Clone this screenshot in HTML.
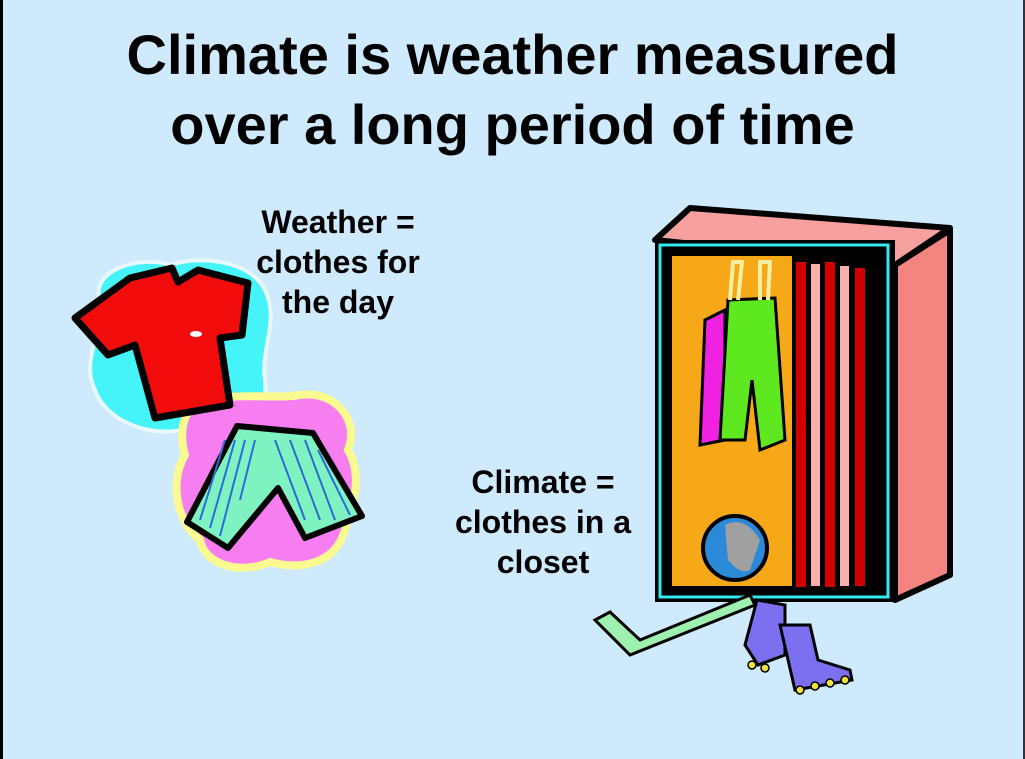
<!DOCTYPE html>
<html><head><style>
body{margin:0;width:1025px;height:759px;overflow:hidden;background:#cfeafc;font-family:"Liberation Sans",sans-serif;position:relative}
.bl{position:absolute;left:0;top:0;width:3px;height:759px;background:#000}
.br{position:absolute;right:0;top:0;width:2px;height:759px;background:#333}
h1{position:absolute;left:0;width:1025px;top:20px;margin:0;text-align:center;font-size:56px;line-height:70px;font-weight:bold;color:#000}
.t{position:absolute;text-align:center;font-weight:bold;font-size:32px;line-height:40px;color:#000}
svg{position:absolute;left:0;top:0}
</style></head><body>
<div class="bl"></div><div class="br"></div>
<h1>Climate is weather measured<br>over a long period of time</h1>
<div class="t" style="left:218px;top:202px;width:240px">Weather =<br>clothes for<br>the day</div>
<div class="t" style="left:423px;top:462px;width:240px">Climate =<br>clothes in a<br>closet</div>
<svg width="1025" height="759">
<path d="M100 300 C90 270 140 255 170 265 C200 255 250 260 265 290 C280 320 260 350 265 380 C270 420 230 440 190 428 C150 440 105 420 95 390 C80 360 105 330 100 300Z" fill="#44f4f8" stroke="#e8f8ff" stroke-width="4"/>
<path d="M195 405 C230 390 270 400 300 395 C335 390 360 420 348 450 C365 480 350 510 345 530 C335 565 300 570 270 562 C240 575 205 565 200 540 C175 520 170 480 185 455 C178 430 185 412 195 405Z" fill="#f77ef0" stroke="#fafa90" stroke-width="8"/>
<path d="M75 318 L130 278 L172 268 L178 282 L198 270 L248 283 L242 335 L220 338 L230 405 L155 418 L135 345 L108 355 Z" fill="#f20c0c" stroke="#000" stroke-width="7" stroke-linejoin="round"/>
<ellipse cx="196" cy="334" rx="6" ry="3" fill="#fff"/>
<path d="M237 426 L313 433 L362 516 L305 538 L278 488 L228 548 L187 522 Z" fill="#7ef2c0" stroke="#000" stroke-width="6" stroke-linejoin="round"/>
<g stroke="#2a6cd8" stroke-width="2">
<line x1="225" y1="440" x2="200" y2="520"/><line x1="235" y1="440" x2="210" y2="528"/><line x1="245" y1="440" x2="220" y2="536"/><line x1="255" y1="440" x2="240" y2="500"/>
<line x1="275" y1="440" x2="305" y2="520"/><line x1="290" y1="440" x2="320" y2="520"/><line x1="305" y1="440" x2="335" y2="520"/><line x1="318" y1="450" x2="350" y2="515"/>
</g>
<path d="M895 265 L950 230 L950 575 L895 600 Z" fill="#f38480" stroke="#000" stroke-width="6" stroke-linejoin="round"/>
<path d="M655 240 L690 208 L950 228 L895 265 Z" fill="#f6a0a0" stroke="#000" stroke-width="6" stroke-linejoin="round"/>
<rect x="655" y="240" width="240" height="362" fill="#000"/>
<rect x="660" y="245" width="228" height="352" fill="none" stroke="#34e8f0" stroke-width="3"/>
<rect x="672" y="256" width="120" height="330" fill="#f7a818"/>
<g fill="#d00000"><rect x="796" y="262" width="10" height="325"/><rect x="825" y="262" width="10" height="325"/><rect x="855" y="268" width="10" height="318"/></g>
<g fill="#f7b0b0"><rect x="811" y="264" width="9" height="322"/><rect x="840" y="266" width="9" height="320"/></g>
<path d="M725 310 L705 320 L700 445 L725 440 Z" fill="#ee22e0" stroke="#000" stroke-width="3"/>
<path d="M728 300 L775 298 L785 440 L760 450 L752 380 L745 440 L720 440 Z" fill="#5ee820" stroke="#000" stroke-width="3"/>
<path d="M730 300 L733 262 L742 262 L738 300 M760 300 L760 262 L770 262 L768 300" stroke="#f8f0a0" stroke-width="4" fill="none"/>
<circle cx="735" cy="548" r="32" fill="#2a8ad8" stroke="#000" stroke-width="4"/>
<path d="M725 525 Q745 515 760 540 L750 570 Q740 575 728 560 Z" fill="#a0a0a0"/>
<path d="M750 595 L640 640 L610 612 L595 620 L630 655 L755 605 Z" fill="#9ef0b0" stroke="#000" stroke-width="3"/>
<path d="M757 600 L785 605 L785 655 L758 665 L745 645 Z" fill="#7c70f0" stroke="#000" stroke-width="3"/>
<path d="M780 625 L810 625 L818 660 L850 670 L852 680 L795 690 Z" fill="#7c70f0" stroke="#000" stroke-width="3"/>
<g fill="#f0e040" stroke="#000" stroke-width="1.5"><circle cx="800" cy="690" r="4"/><circle cx="815" cy="686" r="4"/><circle cx="830" cy="683" r="4"/><circle cx="845" cy="680" r="4"/><circle cx="752" cy="665" r="4"/><circle cx="765" cy="668" r="4"/></g>
</svg>
</body></html>
